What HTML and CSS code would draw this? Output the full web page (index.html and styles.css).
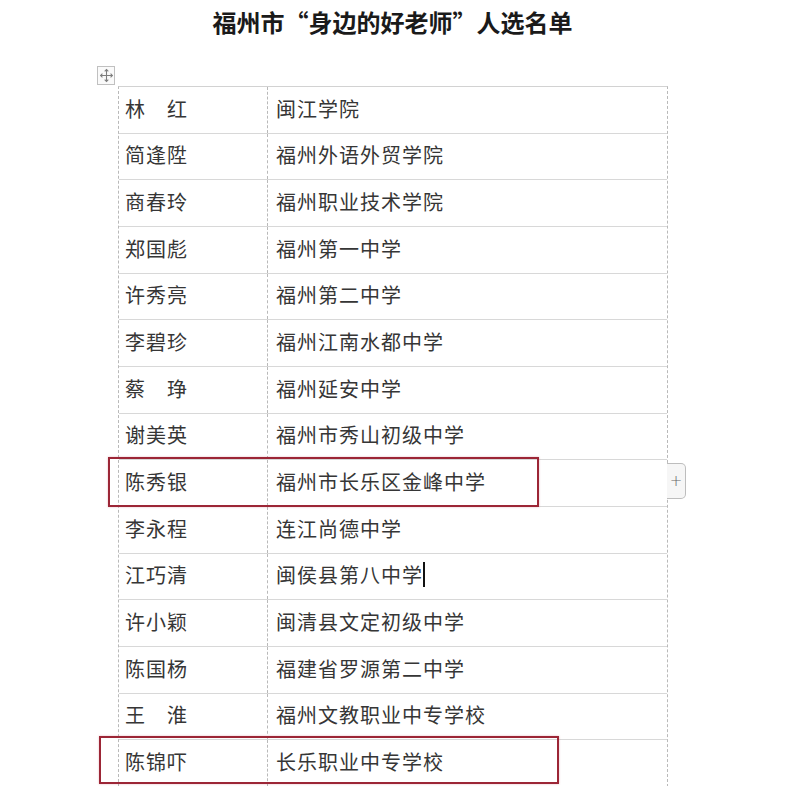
FILE: index.html
```html
<!DOCTYPE html>
<html lang="zh-CN">
<head>
<meta charset="utf-8">
<title>福州市“身边的好老师”人选名单</title>
<link rel="stylesheet" href="styles.css">
</head>
<body>
<h1 class="title">福州市“身边的好老师”人选名单</h1>
<div class="sheet">
  <div class="move-handle">
    <svg width="15" height="15" viewBox="0 0 14 14" fill="none" stroke="#7e7e7e" stroke-width="1">
      <path d="M7 1.5V12.5M1.5 7H12.5"/>
      <path d="M5.3 3.2L7 1.5L8.7 3.2M5.3 10.8L7 12.5L8.7 10.8M3.2 5.3L1.5 7L3.2 8.7M10.8 5.3L12.5 7L10.8 8.7"/>
    </svg>
  </div>
  <div class="grid">
    <div class="row"><div class="cell name">林　红</div><div class="cell school">闽江学院</div></div>
    <div class="row"><div class="cell name">简逢陞</div><div class="cell school">福州外语外贸学院</div></div>
    <div class="row"><div class="cell name">商春玲</div><div class="cell school">福州职业技术学院</div></div>
    <div class="row"><div class="cell name">郑国彪</div><div class="cell school">福州第一中学</div></div>
    <div class="row"><div class="cell name">许秀亮</div><div class="cell school">福州第二中学</div></div>
    <div class="row"><div class="cell name">李碧珍</div><div class="cell school">福州江南水都中学</div></div>
    <div class="row"><div class="cell name">蔡　琤</div><div class="cell school">福州延安中学</div></div>
    <div class="row"><div class="cell name">谢美英</div><div class="cell school">福州市秀山初级中学</div></div>
    <div class="row"><div class="cell name">陈秀银</div><div class="cell school">福州市长乐区金峰中学</div></div>
    <div class="row"><div class="cell name">李永程</div><div class="cell school">连江尚德中学</div></div>
    <div class="row"><div class="cell name">江巧清</div><div class="cell school">闽侯县第八中学<span class="caret"></span></div></div>
    <div class="row"><div class="cell name">许小颖</div><div class="cell school">闽清县文定初级中学</div></div>
    <div class="row"><div class="cell name">陈国杨</div><div class="cell school">福建省罗源第二中学</div></div>
    <div class="row"><div class="cell name">王　淮</div><div class="cell school">福州文教职业中专学校</div></div>
    <div class="row"><div class="cell name">陈锦吓</div><div class="cell school">长乐职业中专学校</div></div>
  </div>
  <div class="mark mark-one"></div>
  <div class="mark mark-two"></div>
  <div class="add-col">+</div>
</div>
</body>
</html>
```

FILE: styles.css
```css
html, body {
  margin: 0;
  padding: 0;
  background: #ffffff;
}

body {
  font-family: "Noto Sans CJK SC", "Noto Sans", sans-serif;
  overflow: hidden;
}

.title {
  margin: 0;
  padding-top: 7px;
  height: 30px;
  line-height: 30px;
  font-size: 24px;
  font-weight: 700;
  color: #1a1a1a;
  text-align: center;
  letter-spacing: 0;
}

.sheet {
  position: relative;
  width: 550px;
  margin: 49px 0 0 118px;
}

.move-handle {
  position: absolute;
  left: -21px;
  top: -20px;
  width: 18px;
  height: 19px;
  border: 1px solid #c0c0c0;
  box-sizing: border-box;
  display: flex;
  align-items: center;
  justify-content: center;
  background: #fafafa;
}

.grid {
  border-top: 1px solid #d2d2d2;
  border-left: 1px dashed #b9b9b9;
  border-right: 1px dashed #b9b9b9;
}

.row {
  display: flex;
  height: 46.67px;
  box-sizing: border-box;
  border-bottom: 1px solid #d8d8d8;
}

.cell {
  display: flex;
  align-items: center;
  padding-bottom: 3px;
  box-sizing: border-box;
  font-size: 20px;
  letter-spacing: 1px;
  color: #363636;
  white-space: nowrap;
}

.name {
  width: 149px;
  padding-left: 6px;
  border-right: 1px dashed #b9b9b9;
}

.school {
  flex: 1;
  padding-left: 8px;
}

.caret {
  display: inline-block;
  width: 2px;
  height: 25px;
  background: #111;
  margin-left: 0;
}

.mark {
  position: absolute;
  box-sizing: border-box;
  border: 2px solid #9c2636;
  box-shadow: 0 0 2px rgba(190, 60, 80, 0.35);
}

.mark-one {
  left: -10px;
  top: 371px;
  width: 431px;
  height: 50px;
}

.mark-two {
  left: -19px;
  top: 650px;
  width: 460px;
  height: 48px;
}

.add-col {
  position: absolute;
  left: 549px;
  top: 377px;
  width: 19px;
  height: 36px;
  box-sizing: border-box;
  border: 1px solid #bdbdbd;
  border-left: none;
  border-radius: 0 5px 5px 0;
  background: #f6f6f6;
  color: #666;
  font-family: "DejaVu Sans", sans-serif;
  font-size: 15px;
  font-weight: 300;
  display: flex;
  align-items: center;
  justify-content: center;
}
```
